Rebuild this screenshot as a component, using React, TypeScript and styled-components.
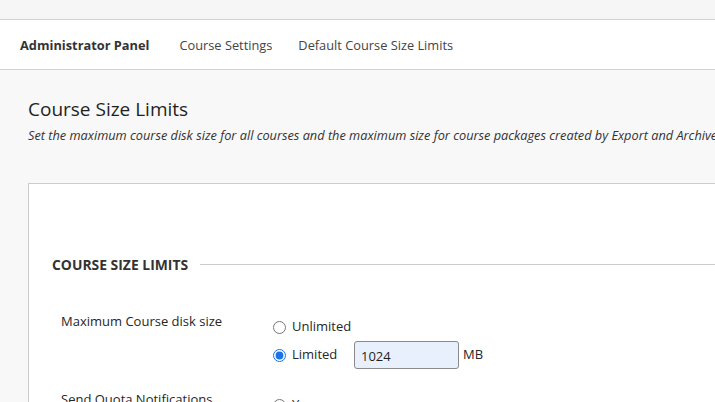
import React from "react";
import styled, { createGlobalStyle } from "styled-components";

const GlobalStyle = createGlobalStyle`
  html, body {
    margin: 0;
    padding: 0;
    background: #f8f8f8;
    overflow: hidden;
  }
  body {
    font-family: "Open Sans", "Noto Sans", sans-serif;
    color: #262626;
  }
`;

const Page = styled.div`
  width: 715px;
  height: 402px;
  overflow: hidden;
  background: #f8f8f8;
`;

const TopStrip = styled.div`
  height: 19px;
  background: #f6f6f6;
  border-bottom: 1px solid #d2d2d2;
`;

const Breadcrumbs = styled.nav`
  height: 49px;
  background: #ffffff;
  border-bottom: 1px solid #d2d2d2;
  display: flex;
  align-items: center;
  padding-left: 20px;
  gap: 26px;
`;

const Crumb = styled.span<{ $current?: boolean }>`
  font-size: 12.8px;
  font-weight: ${(p) => (p.$current ? 700 : 400)};
  color: ${(p) => (p.$current ? "#333333" : "#444444")};
  margin-right: ${(p) => (p.$current ? "4px" : "0")};
  white-space: nowrap;
`;

const Main = styled.main`
  padding: 26px 0 0 28px;
`;

const Title = styled.h1`
  margin: 0;
  font-size: 19px;
  font-weight: 400;
  line-height: 26px;
  color: #1f1f1f;
`;

const Subtitle = styled.p`
  margin: 4px 0 0;
  font-size: 12.75px;
  font-style: italic;
  line-height: 18px;
  color: #333333;
  white-space: nowrap;
`;

const Panel = styled.section`
  margin-top: 39px;
  background: #ffffff;
  border: 1px solid #cccccc;
  border-right: none;
  padding: 71px 0 0 23px;
  height: 400px;
`;

const SectionHead = styled.div`
  display: flex;
  align-items: center;
  gap: 12px;
`;

const SectionTitle = styled.h2`
  margin: 0;
  font-size: 13.9px;
  font-weight: 700;
  color: #333333;
  white-space: nowrap;
`;

const Rule = styled.div`
  flex: 1;
  height: 1px;
  background: #cccccc;
`;

const Row = styled.div<{ $top: number }>`
  display: grid;
  grid-template-columns: 212px 1fr;
  margin-top: ${(p) => p.$top}px;
  padding-left: 9px;
`;

const Label = styled.div`
  font-size: 13px;
  line-height: 18px;
  color: #262626;
`;

const Options = styled.div`
  display: flex;
  flex-direction: column;
`;

const Option = styled.label`
  display: flex;
  align-items: center;
  font-size: 13px;
  color: #262626;
  height: 28px;
`;

const Radio = styled.input`
  margin: 2px 6px 0 0;
  width: 13px;
  height: 13px;
  accent-color: #1a73e8;
`;

const OptionText = styled.span`
  width: 62px;
`;

const SizeInput = styled.input`
  width: 105px;
  height: 28px;
  box-sizing: border-box;
  border: 1px solid #8a8a8a;
  border-radius: 3px;
  background: #e8f0fe;
  font-family: "Open Sans", sans-serif;
  font-size: 13px;
  color: #1f1f1f;
  padding: 2px 6px 0;
  margin-top: 2px;
`;

const Unit = styled.span`
  margin-left: 4px;
  font-size: 13px;
`;

export default function App() {
  return (
    <Page>
      <GlobalStyle />
      <TopStrip />
      <Breadcrumbs>
        <Crumb $current>Administrator Panel</Crumb>
        <Crumb>Course Settings</Crumb>
        <Crumb>Default Course Size Limits</Crumb>
      </Breadcrumbs>
      <Main>
        <Title>Course Size Limits</Title>
        <Subtitle>
          Set the maximum course disk size for all courses and the maximum size
          for course packages created by Export and Archive.
        </Subtitle>
        <Panel>
          <SectionHead>
            <SectionTitle>COURSE SIZE LIMITS</SectionTitle>
            <Rule />
          </SectionHead>
          <Row $top={38}>
            <Label>Maximum Course disk size</Label>
            <Options>
              <Option>
                <Radio type="radio" name="disk" />
                <OptionText>Unlimited</OptionText>
              </Option>
              <Option>
                <Radio type="radio" name="disk" defaultChecked />
                <OptionText>Limited</OptionText>
                <SizeInput defaultValue="1024" />
                <Unit>MB</Unit>
              </Option>
            </Options>
          </Row>
          <Row $top={22}>
            <Label>Send Quota Notifications</Label>
            <Options>
              <Option>
                <Radio type="radio" name="notify" />
                <OptionText>Yes</OptionText>
              </Option>
            </Options>
          </Row>
        </Panel>
      </Main>
    </Page>
  );
}
